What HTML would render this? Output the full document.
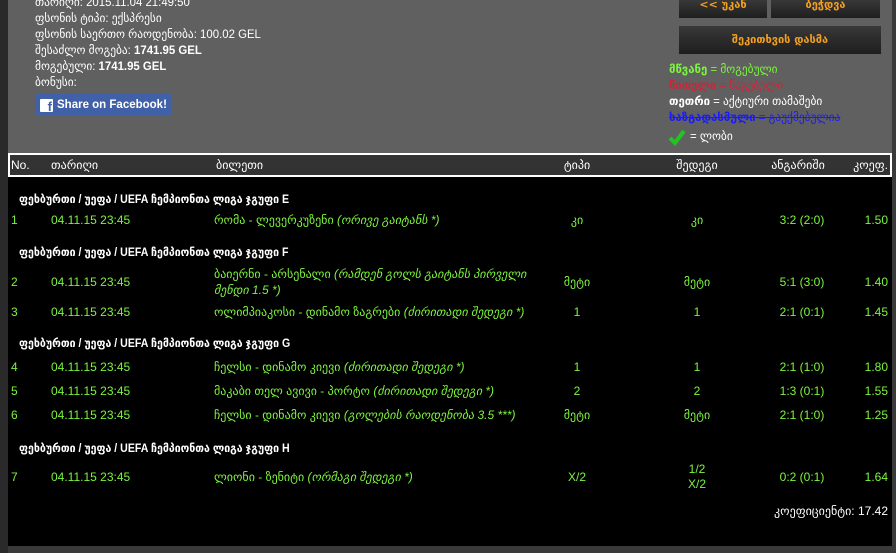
<!DOCTYPE html>
<html><head><meta charset="utf-8"><style>
*{margin:0;padding:0;box-sizing:border-box}
body{width:896px;height:553px;background:#3a3a3a;overflow:hidden;position:relative;font-family:"Liberation Sans","DejaVu Sans",sans-serif;font-size:12px}
.a{position:absolute;white-space:nowrap}
#gray{position:absolute;left:8px;top:0;width:884px;height:154px;background:#606060}
#blk{position:absolute;left:8px;top:154px;width:884px;height:392px;background:#000}
#strip{position:absolute;left:0;top:0;width:8px;height:553px;background:#2a2a2a}
.info{color:#fff;font-size:12px;left:35px;transform:scaleX(.95);transform-origin:left}
.btn{position:absolute;background:linear-gradient(#383838,#1e1e1e);color:#f5a020;font-weight:bold;font-size:11px;text-align:center;font-family:"DejaVu Sans",sans-serif}
.leg{left:669px;font-size:12px;transform:scaleX(.95);transform-origin:left}
#hdr{position:absolute;left:8px;top:153px;width:884px;height:24px;background:#333;border:2px solid #fff}
.h{color:#fff;font-size:12px;top:158px}
.g{color:#fff;font-weight:bold;font-size:11.5px;left:19px;transform:scaleX(.92);transform-origin:left}
.gr{color:#7cf53d;font-size:12px}
.c{text-align:center;width:80px}
.r{text-align:right}
i{font-style:italic}
</style></head><body>
<div id="strip"></div>
<div id="gray"></div>
<div id="blk"></div>
<div class="a info" style="top:-5px">თარიღი: 2015.11.04 21:49:50</div>
<div class="a info" style="top:11px">ფსონის ტიპი: ექსპრესი</div>
<div class="a info" style="top:27px">ფსონის საერთო რაოდენობა: 100.02 GEL</div>
<div class="a info" style="top:43px">შესაძლო მოგება: <b>1741.95 GEL</b></div>
<div class="a info" style="top:59px">მოგებული: <b>1741.95 GEL</b></div>
<div class="a info" style="top:75px">ბონუსი:</div>
<div class="a" style="left:35px;top:94px;height:22px;background:#4060a8;border-radius:2px;color:#fff;font-size:11.5px;font-weight:bold;line-height:22px;padding:0 5px 0 22px"><span style="position:absolute;left:5px;top:5px;width:13px;height:13px;background:#fff;border-radius:1px;color:#4060a8;font-size:13px;line-height:15px;text-align:right;padding-right:1px;font-weight:bold">f</span>Share on Facebook!</div>
<div class="btn" style="left:679px;top:0;width:88px;height:18px;line-height:10px">&lt;&lt; უკან</div>
<div class="btn" style="left:771px;top:0;width:109px;height:18px;line-height:10px">ბეჭდვა</div>
<div class="btn" style="left:679px;top:26px;width:202px;height:28px;line-height:28px">შეკითხვის დასმა</div>
<div class="a leg" style="top:62px;color:#7cf53d"><b>მწვანე</b> = მოგებული</div>
<div class="a leg" style="top:78px;color:#c8283a"><b>წითელი</b> = წაგებული</div>
<div class="a leg" style="top:94px;color:#fff"><b>თეთრი</b> = აქტიური თამაშები</div>
<div class="a leg" style="top:110px;color:#1a1aff;text-decoration:line-through"><b>ხაზგადასმული</b> = გაუქმებულია</div>
<svg class="a" style="left:668px;top:128px" width="18" height="18" viewBox="0 0 18 18"><path d="M2 10 L7 15 L16 3" stroke="#22c322" stroke-width="4" fill="none"/></svg>
<div class="a leg" style="left:690px;top:129px;color:#fff">= ლობი</div>
<div id="hdr"></div>
<div class="a h" style="left:11px">No.</div>
<div class="a h" style="left:51px">თარიღი</div>
<div class="a h" style="left:216px">ბილეთი</div>
<div class="a h c" style="left:537px">ტიპი</div>
<div class="a h c" style="left:657px">შედეგი</div>
<div class="a h c" style="left:758px">ანგარიში</div>
<div class="a h r" style="right:8px">კოეფ.</div>

<div class="a g" style="top:192px">ფეხბურთი / უეფა / UEFA ჩემპიონთა ლიგა ჯგუფი E</div>
<div class="a g" style="top:245px">ფეხბურთი / უეფა / UEFA ჩემპიონთა ლიგა ჯგუფი F</div>
<div class="a g" style="top:336px">ფეხბურთი / უეფა / UEFA ჩემპიონთა ლიგა ჯგუფი G</div>
<div class="a g" style="top:441px">ფეხბურთი / უეფა / UEFA ჩემპიონთა ლიგა ჯგუფი H</div>

<div class="a gr" style="left:11px;top:213px">1</div><div class="a gr" style="left:51px;top:213px">04.11.15 23:45</div>
<div class="a gr" style="left:214px;top:213px">რომა - ლევერკუზენი <i>(ორივე გაიტანს *)</i></div>
<div class="a gr c" style="left:537px;top:213px">კი</div><div class="a gr c" style="left:657px;top:213px">კი</div>
<div class="a gr c" style="left:762px;top:213px">3:2 (2:0)</div><div class="a gr r" style="right:8px;top:213px">1.50</div>

<div class="a gr" style="left:11px;top:275px">2</div><div class="a gr" style="left:51px;top:275px">04.11.15 23:45</div>
<div class="a gr" style="left:214px;top:266px;white-space:normal;width:335px;line-height:16px">ბაიერნი - არსენალი <i>(რამდენ გოლს გაიტანს პირველი მენდი 1.5 *)</i></div>
<div class="a gr c" style="left:537px;top:275px">მეტი</div><div class="a gr c" style="left:657px;top:275px">მეტი</div>
<div class="a gr c" style="left:762px;top:275px">5:1 (3:0)</div><div class="a gr r" style="right:8px;top:275px">1.40</div>

<div class="a gr" style="left:11px;top:305px">3</div><div class="a gr" style="left:51px;top:305px">04.11.15 23:45</div>
<div class="a gr" style="left:214px;top:305px">ოლიმპიაკოსი - დინამო ზაგრები <i>(ძირითადი შედეგი *)</i></div>
<div class="a gr c" style="left:537px;top:305px">1</div><div class="a gr c" style="left:657px;top:305px">1</div>
<div class="a gr c" style="left:762px;top:305px">2:1 (0:1)</div><div class="a gr r" style="right:8px;top:305px">1.45</div>

<div class="a gr" style="left:11px;top:360px">4</div><div class="a gr" style="left:51px;top:360px">04.11.15 23:45</div>
<div class="a gr" style="left:214px;top:360px">ჩელსი - დინამო კიევი <i>(ძირითადი შედეგი *)</i></div>
<div class="a gr c" style="left:537px;top:360px">1</div><div class="a gr c" style="left:657px;top:360px">1</div>
<div class="a gr c" style="left:762px;top:360px">2:1 (1:0)</div><div class="a gr r" style="right:8px;top:360px">1.80</div>

<div class="a gr" style="left:11px;top:384px">5</div><div class="a gr" style="left:51px;top:384px">04.11.15 23:45</div>
<div class="a gr" style="left:214px;top:384px">მაკაბი თელ ავივი - პორტო <i>(ძირითადი შედეგი *)</i></div>
<div class="a gr c" style="left:537px;top:384px">2</div><div class="a gr c" style="left:657px;top:384px">2</div>
<div class="a gr c" style="left:762px;top:384px">1:3 (0:1)</div><div class="a gr r" style="right:8px;top:384px">1.55</div>

<div class="a gr" style="left:11px;top:408px">6</div><div class="a gr" style="left:51px;top:408px">04.11.15 23:45</div>
<div class="a gr" style="left:214px;top:408px">ჩელსი - დინამო კიევი <i>(გოლების რაოდენობა 3.5 ***)</i></div>
<div class="a gr c" style="left:537px;top:408px">მეტი</div><div class="a gr c" style="left:657px;top:408px">მეტი</div>
<div class="a gr c" style="left:762px;top:408px">2:1 (1:0)</div><div class="a gr r" style="right:8px;top:408px">1.25</div>

<div class="a gr" style="left:11px;top:470px">7</div><div class="a gr" style="left:51px;top:470px">04.11.15 23:45</div>
<div class="a gr" style="left:214px;top:470px">ლიონი - ზენიტი <i>(ორმაგი შედეგი *)</i></div>
<div class="a gr c" style="left:537px;top:470px">X/2</div>
<div class="a gr c" style="left:657px;top:462px;line-height:15px">1/2<br>X/2</div>
<div class="a gr c" style="left:762px;top:470px">0:2 (0:1)</div><div class="a gr r" style="right:8px;top:470px">1.64</div>

<div class="a r" style="right:8px;top:504px;color:#fff;font-size:12px">კოეფიციენტი: 17.42</div>
</body></html>
